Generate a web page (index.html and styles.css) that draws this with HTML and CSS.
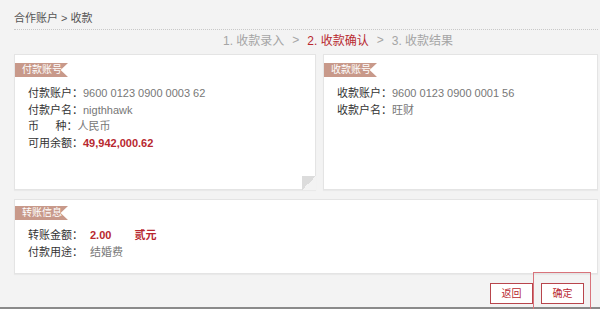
FILE: index.html
```html
<!DOCTYPE html>
<html lang="zh-CN">
<head>
  <meta charset="UTF-8">
  <meta name="viewport" content="width=device-width, initial-scale=1.0">
  <title>收款</title>
  <link rel="stylesheet" href="styles.css">
</head>
<body>
  <div class="page">
    <div class="crumb">合作账户 &gt; 收款</div>
    <div class="steps">
      <span>1. 收款录入</span>
      <span class="sep">&gt;</span>
      <span class="on">2. 收款确认</span>
      <span class="sep">&gt;</span>
      <span>3. 收款结果</span>
    </div>

    <div class="cards">
      <div class="card pay">
        <div class="tag">付款账号</div>
        <ul class="rows">
          <li><b>付款账户：</b>9600 0123 0900 0003 62</li>
          <li><b>付款户名：</b>nigthhawk</li>
          <li><b>币&emsp;&ensp;种：</b>人民币</li>
          <li><b>可用余额：</b><em>49,942,000.62</em></li>
        </ul>
        <i class="fold"></i>
      </div>
      <div class="card recv">
        <div class="tag">收款账号</div>
        <ul class="rows">
          <li><b>收款账户：</b>9600 0123 0900 0001 56</li>
          <li><b>收款户名：</b>旺财</li>
        </ul>
      </div>
    </div>

    <div class="card info">
      <div class="tag">转账信息</div>
      <ul class="rows wide">
        <li><b>转账金额：</b><em>2.00</em><em class="cn">贰元</em></li>
        <li><b>付款用途：</b>结婚费</li>
      </ul>
    </div>

    <div class="actions">
      <a class="btn">返回</a>
      <span class="hl"><a class="btn">确定</a></span>
    </div>
  </div>
</body>
</html>
```

FILE: styles.css
```css
* {
  box-sizing: border-box;
}
body {
  margin: 0;
  background: #f3f3f3;
  font-family: "Liberation Sans", "Noto Sans CJK SC", sans-serif;
  font-size: 11px;
  color: #444;
}
.page {
  height: 309px;
  padding: 0 2px 0 14px;
  border-bottom: 2px solid #8a8a8a;
}
.crumb {
  height: 30px;
  padding-top: 11px;
  color: #555;
  line-height: 14px;
  border-bottom: 1px dotted #c8c8c8;
}
.steps {
  display: flex;
  gap: 5px;
  height: 24px;
  padding: 0 0 5px 209px;
  align-items: center;
  font-size: 12px;
  color: #a5a5a5;
}
.steps .sep {
  margin: 0 3px;
}
.steps .on {
  color: #b8282f;
}
.cards {
  display: flex;
  gap: 7px;
}
.card {
  position: relative;
  background: #fff;
  border: 1px solid #e4e4e4;
  box-shadow: 0 1px 1px rgba(0, 0, 0, .04);
}
.pay {
  width: 302px;
  height: 136px;
}
.recv {
  flex: 1;
  height: 136px;
}
.info {
  height: 75px;
  margin-top: 9px;
}
.tag {
  width: 53px;
  height: 14px;
  margin-top: 8px;
  padding-left: 7px;
  line-height: 14px;
  font-size: 10px;
  color: #fff;
  background: #c8998a;
  clip-path: polygon(0 0, 100% 0, 86% 50%, 100% 100%, 0 100%);
}
.info .tag {
  margin-top: 6px;
}
.rows {
  list-style: none;
  margin: 8px 0 0;
  padding-left: 13px;
}
.rows li {
  height: 16.5px;
  line-height: 16.5px;
  color: #777;
  white-space: nowrap;
}
.rows b {
  font-weight: normal;
  color: #333;
}
.rows em {
  font-style: normal;
  font-weight: bold;
  color: #b8282f;
}
.wide {
  margin-top: 7px;
}
.wide b {
  display: inline-block;
  width: 62px;
}
.wide .cn {
  margin-left: 23px;
}
.fold {
  position: absolute;
  right: -1px;
  bottom: -1px;
  width: 14px;
  height: 14px;
  background: linear-gradient(135deg, #dcdcdc 50%, #f3f3f3 50%);
}
.actions {
  display: flex;
  justify-content: flex-end;
  gap: 8px;
  padding: 9px 14px 0 0;
}
.btn {
  display: block;
  width: 43px;
  height: 21px;
  line-height: 19px;
  text-align: center;
  font-size: 10px;
  color: #b8282f;
  border: 1px solid #b8454c;
  background: #fff;
}
.hl {
  position: relative;
}
.hl::after {
  content: "";
  position: absolute;
  left: -8px;
  right: -7px;
  top: -11px;
  bottom: -6px;
  border: 1.5px solid #d9737b;
}
```
